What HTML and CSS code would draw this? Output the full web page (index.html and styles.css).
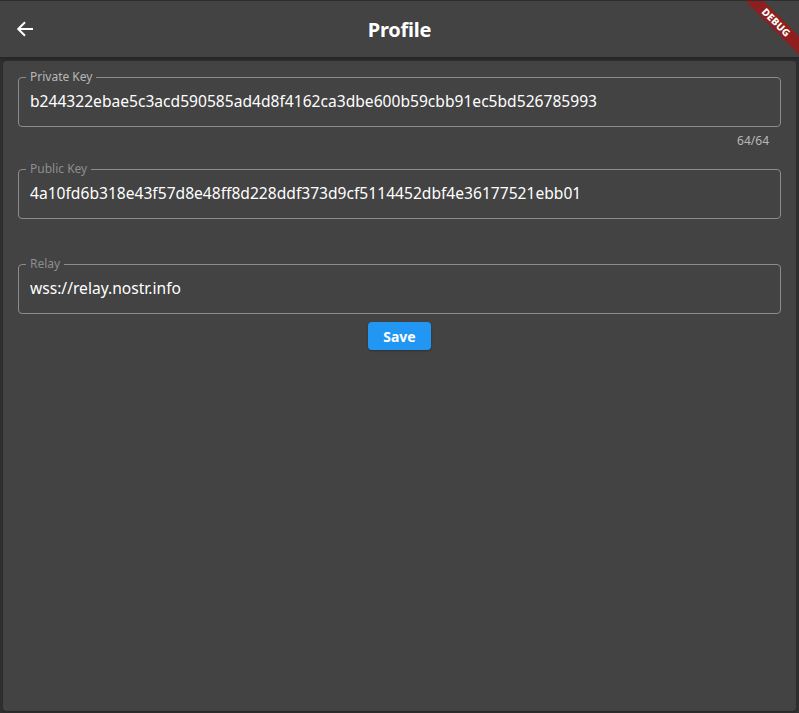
FILE: index.html
```html
<!DOCTYPE html>
<html>
<head>
<meta charset="utf-8">
<link rel="stylesheet" href="styles.css">
</head>
<body>
<div class="frame">
  <header class="appbar">
    <button class="back" aria-label="Back">
      <svg width="18" height="18" viewBox="0 0 18 18"><path d="M17 9H2.5M9 2.2L2.2 9L9 15.8" fill="none" stroke="#fff" stroke-width="2"/></svg>
    </button>
    <h1 class="title">Profile</h1>
    <div class="debug"><span>DEBUG</span></div>
  </header>
  <main class="card">
    <fieldset class="field field-active">
      <legend>Private Key</legend>
      <div class="value">b244322ebae5c3acd590585ad4d8f4162ca3dbe600b59cbb91ec5bd526785993</div>
    </fieldset>
    <div class="counter">64/64</div>
    <fieldset class="field field-2">
      <legend>Public Key</legend>
      <div class="value">4a10fd6b318e43f57d8e48ff8d228ddf373d9cf5114452dbf4e36177521ebb01</div>
    </fieldset>
    <fieldset class="field field-3">
      <legend>Relay</legend>
      <div class="value">wss://relay.nostr.info</div>
    </fieldset>
    <div class="actions"><button class="save">Save</button></div>
  </main>
</div>
</body>
</html>
```
FILE: styles.css
```css
html, body {
  margin: 0;
  padding: 0;
  background: #2f2f2f;
}
body {
  font-family: "Noto Sans", "Open Sans", sans-serif;
  color: #fff;
  width: 799px;
  height: 713px;
  overflow: hidden;
}
.frame {
  display: flex;
  flex-direction: column;
  height: 712px;
  padding-top: 1px;
}
.appbar {
  position: relative;
  height: 56px;
  background: #434343;
  display: flex;
  align-items: center;
  justify-content: center;
  overflow: hidden;
  box-shadow: 0 2px 3px rgba(0,0,0,0.25);
  flex: none;
}
.back {
  position: absolute;
  left: 16px;
  top: 19px;
  width: 18px;
  height: 18px;
  padding: 0;
  border: 0;
  background: none;
  display: flex;
}
.title {
  margin: 0;
  font-size: 20px;
  font-weight: 700;
  letter-spacing: -0.2px;
}
.debug {
  position: absolute;
  top: -1px;
  right: 0;
  width: 60px;
  height: 60px;
  overflow: hidden;
}
.debug span {
  position: absolute;
  top: 16px;
  right: -27px;
  width: 100px;
  height: 13px;
  background: #8e1f1f;
  color: #fff;
  font-size: 10px;
  font-weight: 800;
  line-height: 13px;
  text-align: center;
  transform: rotate(45deg);
  letter-spacing: 0.2px;
}
.card {
  margin: 4px 3px 2px 3px;
  flex: 1;
  background: #434343;
  border-radius: 4px;
  padding: 9px 15px 0 15px;
  box-shadow: 0 1px 2px rgba(0,0,0,0.2);
}
.field {
  margin: 0;
  padding: 0 11px 0 7px;
  border: 1px solid #8c8c8c;
  border-radius: 4px;
  min-width: 0;
}
.field legend {
  padding: 0 4px;
  font-size: 12px;
  line-height: 14px;
  color: #8e8e8e;
}
.field-active legend {
  color: #b8b8b8;
}
.value {
  padding: 7px 0 15px 4px;
  font-size: 15.6px;
  line-height: 20px;
  white-space: nowrap;
  color: #fff;
}
.counter {
  text-align: right;
  font-size: 12px;
  color: #b8b8b8;
  padding: 6px 12px 0 0;
  line-height: 15px;
  height: 21px;
}
.field-2 {
  margin-top: 8px;
}
.field-3 {
  margin-top: 38px;
}
.actions {
  display: flex;
  justify-content: center;
  margin-top: 8px;
}
.save {
  width: 63px;
  height: 28px;
  border: 0;
  border-radius: 4px;
  background: #2196f3;
  color: #fff;
  font-family: "Noto Sans", sans-serif;
  font-size: 14px;
  font-weight: 700;
  padding: 0;
  box-shadow: 0 1px 2px rgba(0,0,0,0.3);
}
```
